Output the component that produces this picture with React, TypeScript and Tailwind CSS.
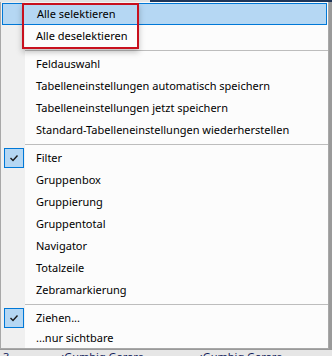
import React from 'react'

type Item = { label: string; checked?: boolean; hot?: boolean; h?: string }
type Entry = Item | 'sep'

const entries: Entry[] = [
  { label: 'Alle selektieren', hot: true },
  { label: 'Alle deselektieren' },
  'sep',
  { label: 'Feldauswahl' },
  { label: 'Tabelleneinstellungen automatisch speichern' },
  { label: 'Tabelleneinstellungen jetzt speichern' },
  { label: 'Standard-Tabelleneinstellungen wiederherstellen' },
  'sep',
  { label: 'Filter', checked: true },
  { label: 'Gruppenbox' },
  { label: 'Gruppierung' },
  { label: 'Gruppentotal' },
  { label: 'Navigator' },
  { label: 'Totalzeile' },
  { label: 'Zebramarkierung' },
  'sep',
  { label: 'Ziehen...', checked: true },
  { label: '...nur sichtbare', h: 'h-[19px]' },
]

function Check(){
  return (
    <div className="flex h-[20px] w-[20px] items-center justify-center border border-[#0078d7] bg-[#b5d7f3]">
      <svg width="10" height="8" viewBox="0 0 10 8">
        <path d="M1.5 4 L4 6.5 L8.5 1.5" fill="none" stroke="#1a1a1a" strokeWidth="1.4" />
      </svg>
    </div>
  )
}

function Row({ item }: { item: Item }){
  const hot = item.hot ? 'mx-[1px] border border-[#0078d7] bg-[#b5d7f3]' : ''
  return (
    <div className={`flex items-center ${item.h ?? 'h-[22px]'} ${hot}`}>
      <div className={`flex shrink-0 justify-end pr-[1px] ${item.hot ? 'w-[23px]' : 'w-[24px]'}`}>
        {item.checked && <Check />}
      </div>
      <span className="pl-[11px] whitespace-nowrap">{item.label}</span>
    </div>
  )
}

export default function App(){
  return (
    <div className="relative h-[356px] w-[332px] overflow-hidden bg-[#d8d8d8] text-[11px] text-black" style={{ fontFamily: '"Segoe UI", "Noto Sans", sans-serif' }}>
      <div className="flex h-[2px]">
        <div className="w-[150px] bg-[#e4e4e4]" />
        <div className="flex-1 bg-[#1f3658]" />
      </div>
      <div className="flex">
        <div className="relative w-[329px] border border-t-0 border-[#a8a8a8] bg-[linear-gradient(to_right,#f0f0f0_0,#f0f0f0_24px,#fcfcfc_24px)] pt-[1px]">
          {entries.map((e, i) =>
            e === 'sep'
              ? <div key={i} className="flex h-[6px] items-center pl-[24px]"><div className="h-px w-full bg-[#bdbdbd]" /></div>
              : <Row key={i} item={e} />
          )}
          <div className="absolute left-[21px] top-[1px] h-[46px] w-[117px] border-2 border-[#c8101e] shadow-[0_3px_6px_rgba(0,0,0,0.25)]" />
        </div>
        <div className="w-[3px] bg-[#9a9a9a]" />
      </div>
      <div className="flex h-[8px] items-start gap-[52px] overflow-hidden border-t border-[#9a9a9a] bg-[#e6e6e6] pl-[3px] pt-[1px] text-[11px] leading-[11px] text-[#10205a]">
        <span>3</span>
        <div className="flex gap-[56px]">
          <span>:Gumbig Gerera</span>
          <span>:Gumbig Gerera</span>
        </div>
      </div>
    </div>
  )
}
